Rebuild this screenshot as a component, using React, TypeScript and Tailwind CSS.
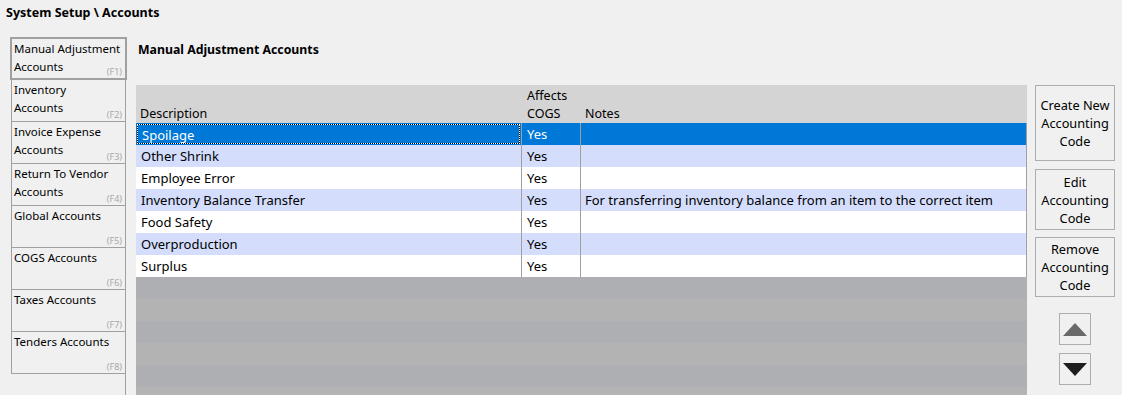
import React from 'react'

const tabs = [
    { label: ['Manual Adjustment', 'Accounts'], key: 'F1' },
    { label: ['Inventory', 'Accounts'], key: 'F2' },
    { label: ['Invoice Expense', 'Accounts'], key: 'F3' },
    { label: ['Return To Vendor', 'Accounts'], key: 'F4' },
    { label: ['Global Accounts'], key: 'F5' },
    { label: ['COGS Accounts'], key: 'F6' },
    { label: ['Taxes Accounts'], key: 'F7' },
    { label: ['Tenders Accounts'], key: 'F8' },
]

const rows = [
    { description: 'Spoilage', cogs: 'Yes', notes: '' },
    { description: 'Other Shrink', cogs: 'Yes', notes: '' },
    { description: 'Employee Error', cogs: 'Yes', notes: '' },
    { description: 'Inventory Balance Transfer', cogs: 'Yes', notes: 'For transferring inventory balance from an item to the correct item' },
    { description: 'Food Safety', cogs: 'Yes', notes: '' },
    { description: 'Overproduction', cogs: 'Yes', notes: '' },
    { description: 'Surplus', cogs: 'Yes', notes: '' },
]

const buttons = [
    { lines: ['Create New', 'Accounting', 'Code'], h: 'h-[76px]' },
    { lines: ['Edit', 'Accounting', 'Code'], h: 'h-[61px]' },
    { lines: ['Remove', 'Accounting', 'Code'], h: 'h-[60px]' },
]

const Tab = ({ label, fkey, selected }: { label: string[]; fkey: string; selected: boolean }) => {
    return (
        <div
            className={
                selected
                    ? 'relative h-[43px] w-[117px] shrink-0 border-2 border-[#a0a0a0] pl-[2px] pt-[1px]'
                    : 'relative ml-[1px] h-[42px] w-[115px] shrink-0 border-x border-b border-[#a0a0a0] pl-[2px] pt-[1px]'
            }
        >
            {label.map((line) => (
                <div key={line} className="leading-[18px] text-[11.5px] text-black">{line}</div>
            ))}
            <span className="absolute right-[3px] bottom-[1px] text-[9px] leading-[10px] text-[#a8a8a8]">({fkey})</span>
        </div>
    )
}

export default function App() {
    return (
        <div className="flex h-[395px] w-[1122px] flex-col overflow-hidden bg-[#f0f0f0] font-['Noto_Sans',sans-serif] text-black">
            <div className="h-[28px] shrink-0 pl-[6px] pt-[5px] text-[12.5px] font-bold leading-[16px]">System Setup \ Accounts</div>

            <div className="flex min-h-0 flex-1 overflow-hidden">
                {/* left tab strip */}
                <div className="flex w-[127px] shrink-0 flex-col pl-[10px] pt-[9px]">
                    {tabs.map((t, i) => (
                        <Tab key={t.key} label={t.label} fkey={t.key} selected={i === 0} />
                    ))}
                    <div className="ml-[1px] w-[115px] flex-1 border-r border-[#a0a0a0]" />
                </div>

                {/* main panel */}
                <div className="flex min-h-0 flex-1 flex-col pl-[9px]">
                    <div className="shrink-0 pl-[2px] pt-[14px] text-[12.3px] font-bold leading-[16px]">Manual Adjustment Accounts</div>

                    <div className="mt-[27px] flex min-h-0 flex-1">
                        {/* grid */}
                        <div className="flex w-[891px] flex-col overflow-hidden text-[13px]">
                            <div className="flex h-[38px] shrink-0 items-end bg-[#d4d4d4] text-[12.5px] leading-[18px]">
                                <div className="w-[385px] pl-[4px]">Description</div>
                                <div className="w-[59px] pl-[6px]">Affects<br />COGS</div>
                                <div className="flex-1 pl-[5px]">Notes</div>
                            </div>
                            {rows.map((r, i) => {
                                const selected = i === 0
                                const bg = selected ? 'bg-[#0078d7] text-white' : i % 2 === 1 ? 'bg-[#d4defc]' : 'bg-white'
                                return (
                                    <div key={r.description} className={`flex h-[22px] shrink-0 border-r border-[#a0a0a0] leading-[23px] ${bg}`}>
                                        <div className={selected ? 'm-[1px] w-[383px] border border-black pl-[4px] leading-[21px] outline-1 -outline-offset-1 outline-dotted outline-white' : 'w-[385px] pl-[5px]'}>
                                            {r.description}
                                        </div>
                                        <div className="w-[59px] border-l border-[#a0a0a0] pl-[5px]">{r.cogs}</div>
                                        <div className="flex-1 border-l border-[#a0a0a0] pl-[4px]">{r.notes}</div>
                                    </div>
                                )
                            })}
                            {[0, 1, 2, 3, 4, 5].map((n) => (
                                <div key={n} className={n % 2 === 0 ? 'h-[22px] shrink-0 bg-[#aeafb3]' : 'h-[22px] shrink-0 bg-[#b3b3b3]'} />
                            ))}
                        </div>

                        {/* action buttons */}
                        <div className="ml-[8px] flex w-[80px] shrink-0 flex-col items-center">
                            {buttons.map((b, i) => (
                                <div
                                    key={b.lines[0]}
                                    className={`flex w-[80px] shrink-0 ${b.h} ${i === 1 ? 'mt-[8px]' : i === 2 ? 'mt-[7px]' : ''} flex-col items-center justify-center border border-[#adadad] text-[12.75px] leading-[18px]`}
                                >
                                    {b.lines.map((l) => (
                                        <span key={l}>{l}</span>
                                    ))}
                                </div>
                            ))}
                            <div className="mt-[16px] flex h-[32px] w-[32px] shrink-0 items-center justify-center border border-[#adadad]">
                                <svg width="24" height="13" viewBox="0 0 24 13"><path d="M0 13 L12 0 L24 13 Z" fill="#6a6a6a" /></svg>
                            </div>
                            <div className="mt-[8px] flex h-[32px] w-[32px] shrink-0 items-center justify-center border border-[#adadad]">
                                <svg width="24" height="13" viewBox="0 0 24 13"><path d="M0 0 L24 0 L12 13 Z" fill="#1e1e1e" /></svg>
                            </div>
                        </div>
                    </div>
                </div>
            </div>
        </div>
    )
}
